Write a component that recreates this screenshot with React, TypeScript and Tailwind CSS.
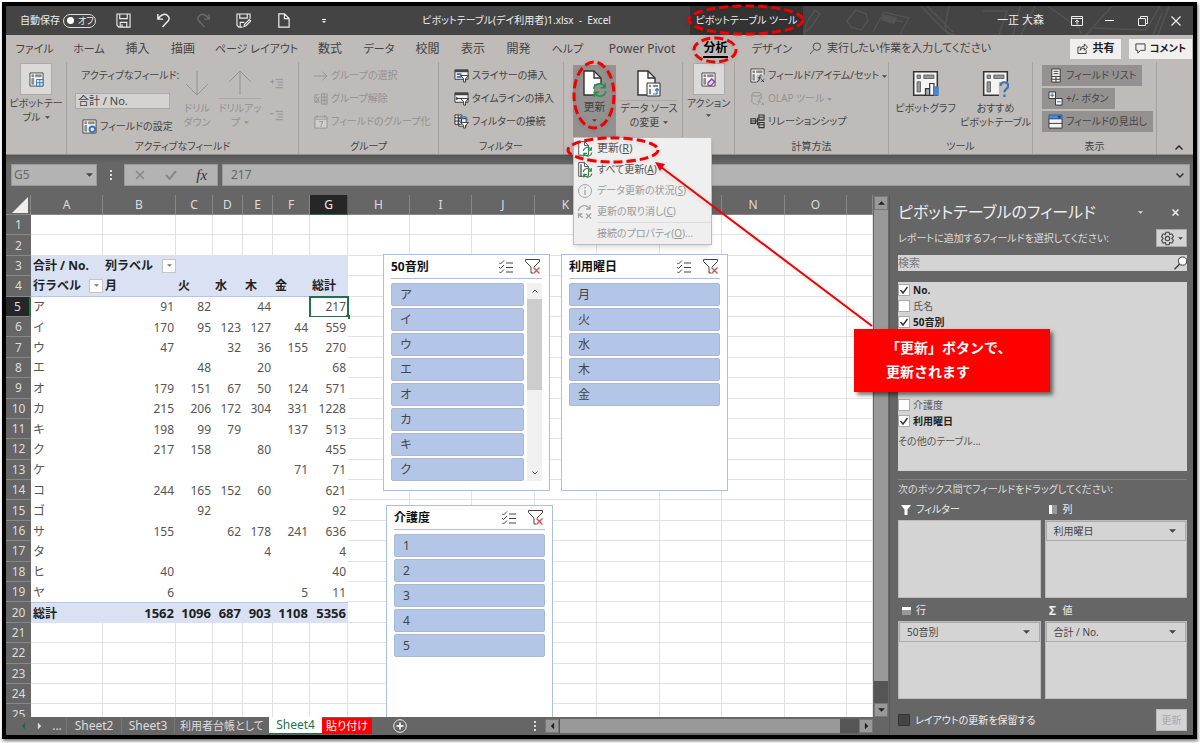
import type { ReactNode } from "react";
import clsx from "clsx";

const tabs = [
  { name: "ファイル", cls: "w-[57px] text-[11px]" },
  { name: "ホーム", cls: "w-[52px] text-[11px]" },
  { name: "挿入", cls: "w-[45px] text-xs" },
  { name: "描画", cls: "w-[46px] text-xs" },
  { name: "ページ レイアウト", cls: "w-[101px] text-[11px]" },
  { name: "数式", cls: "w-[46px] text-xs" },
  { name: "データ", cls: "w-[52px] text-[11px]" },
  { name: "校閲", cls: "w-[45px] text-xs" },
  { name: "表示", cls: "w-[46px] text-xs" },
  { name: "開発", cls: "w-[45px] text-xs" },
  { name: "ヘルプ", cls: "w-[53px] text-[11px]" },
  { name: "Power Pivot", cls: "w-[96px] text-xs" },
  { name: "分析", cls: "w-[51px] text-xs font-bold text-black", active: true },
  { name: "デザイン", cls: "w-[62px] text-[11px]" },
];

const columns = [
  { name: "A", cls: "w-[72px]" },
  { name: "B", cls: "w-[73px]" },
  { name: "C", cls: "w-[37px]" },
  { name: "D", cls: "w-[30px]" },
  { name: "E", cls: "w-[30px]" },
  { name: "F", cls: "w-[37px]" },
  { name: "G", cls: "w-[38px]" },
  { name: "H", cls: "w-[62px]" },
  { name: "I", cls: "w-[62px]" },
  { name: "J", cls: "w-[63px]" },
  { name: "K", cls: "w-[62px]" },
  { name: "L", cls: "w-[63px]" },
  { name: "M", cls: "w-[62px]" },
  { name: "N", cls: "w-[63px]" },
  { name: "O", cls: "w-[62px]" },
  { name: "", cls: "" },
];

const cells: Record<number, string[]> = {
  3: ["合計 / No.", "列ラベル", "", "", "", "", ""],
  4: ["行ラベル", "月", "火", "水", "木", "金", "総計"],
  5: ["ア", "91", "82", "", "44", "", "217"],
  6: ["イ", "170", "95", "123", "127", "44", "559"],
  7: ["ウ", "47", "", "32", "36", "155", "270"],
  8: ["エ", "", "48", "", "20", "", "68"],
  9: ["オ", "179", "151", "67", "50", "124", "571"],
  10: ["カ", "215", "206", "172", "304", "331", "1228"],
  11: ["キ", "198", "99", "79", "", "137", "513"],
  12: ["ク", "217", "158", "", "80", "", "455"],
  13: ["ケ", "", "", "", "", "71", "71"],
  14: ["コ", "244", "165", "152", "60", "", "621"],
  15: ["ゴ", "", "92", "", "", "", "92"],
  16: ["サ", "155", "", "62", "178", "241", "636"],
  17: ["タ", "", "", "", "4", "", "4"],
  18: ["ヒ", "40", "", "", "", "", "40"],
  19: ["ヤ", "6", "", "", "", "5", "11"],
  20: ["総計", "1562", "1096", "687", "903", "1108", "5356"],
};

const rowNumbers = Array.from({ length: 25 }, (_, i) => i + 1);

function Caret({ className = "" }: { className?: string }) {
  return (
    <svg viewBox="0 0 8 4" className={clsx("inline-block shrink-0", className || "h-[3px] w-[5px]")}>
      <path d="M0 0h8L4 4z" fill="currentColor" />
    </svg>
  );
}

function PivotIcon({ className = "size-[15px]", children }: { className?: string; children?: ReactNode }) {
  return (
    <svg viewBox="0 0 16 16" className={clsx("shrink-0", className)} fill="none">
      <path d="M1 1h14v14H1z" fill="#f4f4f4" stroke="#333" strokeWidth=".9" />
      <path d="M3 3h2v2H3zM7 3h6v2H7zM3 7h2v6H3z" fill="#999" stroke="#555" strokeWidth=".5" />
      {children}
    </svg>
  );
}

function RefreshArrows({ color = "#1e9448" }: { color?: string }) {
  return (
    <g fill="none" stroke={color} strokeWidth="1.4">
      <path d="M1.500 6A5 5 0 0 1 11 4.500M11.500 1v4h-4" />
      <path d="M12 8a5 5 0 0 1-9.500 1.500M2 13V9h4" />
    </g>
  );
}

function PageIcon({ children, className }: { children?: ReactNode; className: string }) {
  return (
    <svg viewBox="0 0 26 28" className={className} fill="none">
      <path d="M2 1h10l7 7v17H2z" fill="#fdfdfd" stroke="#333" strokeWidth="1.4" />
      <path d="M12 1v7h7" stroke="#333" strokeWidth="1.4" />
      {children}
    </svg>
  );
}

function SlicerIcon({ timeline }: { timeline?: boolean }) {
  return (
    <svg viewBox="0 0 16 16" className="size-[15px] shrink-0" fill="none">
      <path d="M1 2h14v10H1z" fill="#f4f4f4" stroke="#333" />
      <path d="M1 2h14v2.500H1z" fill="#444" />
      {timeline ? (
        <path d="M3 8h6M3 6.500v3" stroke="#333" strokeWidth="1.300" />
      ) : (
        <path d="M3 6.500h5M3 9.500h5" stroke="#3b73b9" strokeWidth="1.800" />
      )}
      <path d="M7 8h8.500l-3.200 3.500V15h-2v-3.500z" fill="#fff" stroke="#333" />
    </svg>
  );
}

function Group({ label, className, children }: { label?: string; className: string; children?: ReactNode }) {
  return (
    <section className={clsx("relative flex shrink-0 flex-col border-r border-[#a5a19f]", className)}>
      <div className="flex h-[77px] items-start">{children}</div>
      <h2 className="h-4 text-center text-[10px] leading-4 font-normal">{label}</h2>
    </section>
  );
}

function Command({ icon, children, disabled }: { icon: ReactNode; children: ReactNode; disabled?: boolean }) {
  return (
    <button
      disabled={disabled}
      className="flex h-[21px] items-center gap-[3px] text-[10px] whitespace-nowrap disabled:text-[#949190]"
    >
      {icon}
      <span>{children}</span>
    </button>
  );
}

function CheckMark() {
  return (
    <svg viewBox="0 0 12 12" className="pointer-events-none absolute top-[2px] left-0 hidden size-3 peer-checked:block">
      <path d="M2.500 6l2.500 3 4.500-6" fill="none" stroke="#333" strokeWidth="1.400" />
    </svg>
  );
}

function Field({ name, checked }: { name: string; checked?: boolean }) {
  return (
    <label className={clsx("relative flex h-4 items-center gap-[3px]", checked ? "font-bold text-[#222]" : "text-[#555]")}>
      <input
        type="checkbox"
        defaultChecked={checked}
        className="peer size-3 appearance-none border border-[#aaa] bg-white"
      />
      <CheckMark />
      {name}
    </label>
  );
}

function TitleBar() {
  return (
    <header className="relative flex h-[29px] shrink-0 items-center bg-[#444] text-[11px] text-[#eee]">
      <svg viewBox="0 0 390 29" className="absolute right-0 h-[29px] w-[390px]" fill="none" stroke="#535353" strokeWidth="1.500">
        <path d="M1 27l3-11 8-12 5 4-9 13zM44 15l9-11 10 4 2 7-7 9-10-3zM70 26l11-20 25 6-9 16M78 11l22 5M118 0l28 29M124 0l26 26M146 0l-4 20q0 7 10 9M180 5h24l-8 24M210 29l7-29M218 29l14-29M245 0l30 22M273 10l5 18M283 29l26-29h48l-14 24-52-2M350 29l9-22M366 0l-11 29" />
        <path d="M81 9l12 3-2 5-11-3z" fill="#535353" />
      </svg>
      <div className="flex w-[684px] items-center">
        <div className="flex shrink-0 items-center gap-[3px] pl-[14px] text-[10px] whitespace-nowrap">
          <span id="autosave">自動保存</span>
          <button
            role="switch"
            aria-checked="false"
            aria-labelledby="autosave"
            className="flex h-[14px] w-[33px] items-center gap-1 rounded-full border border-[#ddd] pl-[3px] text-[9px]"
          >
            <span className="size-[7px] shrink-0 rounded-full bg-white" />
            オフ
          </button>
        </div>
        <div className="flex shrink-0 items-center gap-[25px] pl-5">
          <button aria-label="上書き保存">
            <svg viewBox="0 0 16 16" className="size-[15px]" fill="none" stroke="#eee" strokeWidth="1.200">
              <path d="M1 1h14v14H3l-2-2zM4 1v5h8V1M4.500 15v-5h7v5M6.500 15v-3" />
            </svg>
          </button>
          <button aria-label="元に戻す">
            <svg viewBox="0 0 16 16" className="size-[15px]" fill="none" stroke="#eee" strokeWidth="1.500">
              <path d="M2 1v5.500h5.500M2 6.500C5 2 9 0 12 2.500s2.500 5-.500 7.500L7 15" />
            </svg>
          </button>
          <button aria-label="やり直し">
            <svg viewBox="0 0 16 16" className="size-[15px]" fill="none" stroke="#6a6a6a" strokeWidth="1.500">
              <path d="M14 1v5.500H8.500M14 6.500C11 2 7 0 4 2.500s-2.500 5 .500 7.500L9 15" />
            </svg>
          </button>
          <button aria-label="名前を付けて保存">
            <svg viewBox="0 0 16 16" className="size-[15px]" fill="none" stroke="#eee" strokeWidth="1.200">
              <path d="M15 6V1H1v12l2 2h4M4 1v4.500h8V1M4.500 15v-5H9M8.500 14.500l.700-2.500 5-5 1.500 1.500-5 5z" />
            </svg>
          </button>
          <button aria-label="新規作成">
            <svg viewBox="0 0 16 16" className="size-[15px]" fill="none" stroke="#eee" strokeWidth="1.300">
              <path d="M3 1h6l5 5v9H3zM9 1v5h5" />
            </svg>
          </button>
          <button aria-label="カスタマイズ" className="flex w-4 flex-col items-center gap-px">
            <span className="h-px w-1 bg-white" />
            <Caret className="h-[2px] w-1" />
          </button>
        </div>
        <h1 className="flex-1 pl-[11px] text-center text-[10px] whitespace-nowrap">
          ピボットテーブル(デイ利用者)1.xlsx &nbsp;-&nbsp; Excel
        </h1>
      </div>
      <div className="flex h-full w-[113px] items-center justify-center bg-[#333] text-[10px] whitespace-nowrap">
        ピボットテーブル ツール
      </div>
      <div className="relative flex flex-1 items-center justify-end">
        <span className="pr-4">一正 大森</span>
        <button aria-label="リボンの表示オプション" className="flex w-[33px] justify-center">
          <svg viewBox="0 0 12 10" className="h-[10px] w-3" fill="none" stroke="#eee">
            <path d="M.500.500h11v9H.500zM.500 2.500h11M6 8.500V4M4 6l2-2 2 2" />
          </svg>
        </button>
        <button aria-label="最小化" className="flex w-[33px] justify-center">
          <span className="h-px w-[9px] bg-white" />
        </button>
        <button aria-label="元のサイズに戻す" className="flex w-[33px] justify-center">
          <svg viewBox="0 0 10 10" className="size-[10px]" fill="none" stroke="#eee">
            <path d="M.500 2.500h7v7h-7zM2.500 2.500v-2h7v7h-2" />
          </svg>
        </button>
        <button aria-label="閉じる" className="flex w-[34px] justify-center">
          <svg viewBox="0 0 10 10" className="size-[10px]" stroke="#eee" strokeWidth="1.200">
            <path d="M.500.500l9 9M9.500.500l-9 9" />
          </svg>
        </button>
      </div>
    </header>
  );
}

function TabBar() {
  return (
    <nav className="flex h-[27px] shrink-0 items-center text-[#444]">
      {tabs.map((tab) => (
        <button key={tab.name} className={clsx("flex h-[26px] shrink-0 items-center justify-center whitespace-nowrap", tab.cls)}>
          <span className={clsx("leading-[17px]", tab.active && "border-b-2 border-black leading-[16px]")}>{tab.name}</span>
        </button>
      ))}
      <label className="flex flex-1 items-center gap-[5px] pl-[6px]">
        <svg viewBox="0 0 14 14" className="size-[13px] shrink-0" fill="none" stroke="#444">
          <circle cx="8.500" cy="5" r="4" />
          <path d="M5.500 8L1 13" />
        </svg>
        <input
          placeholder="実行したい作業を入力してください"
          className="w-full min-w-0 text-[11px] outline-none placeholder:text-[#444]"
        />
      </label>
      <button className="flex h-5 w-[51px] shrink-0 items-center justify-center gap-[5px] bg-[#f1f0ef] text-[11px] font-bold text-[#222]">
        <svg viewBox="0 0 12 12" className="size-[11px]" fill="none" stroke="#333">
          <path d="M4 4.500H1v7h9V8M3.500 8c0-3 2-4.500 4.500-4.500V1l3.500 3.500L8 8V5.500C6 5.500 4.500 6 3.500 8z" />
        </svg>
        共有
      </button>
      <button className="mr-px ml-2 flex h-5 w-[63px] shrink-0 items-center justify-center gap-1 bg-[#f1f0ef] text-[10px] font-bold whitespace-nowrap text-[#222]">
        <svg viewBox="0 0 12 12" className="size-[11px]" fill="none" stroke="#333">
          <path d="M1 1h10v7H6l-3 3V8H1z" />
        </svg>
        コメント
      </button>
    </nav>
  );
}

function RefreshMenu() {
  return (
    <ul
      role="menu"
      className="absolute top-[75px] left-[9px] z-10 w-[139px] border border-[#bdbdbd] bg-[#efefef] text-[11px] text-[#555] shadow-md [&_button]:flex [&_button]:h-[21px] [&_button]:w-full [&_button]:items-center [&_button]:gap-1 [&_button]:pl-[3px] [&_button]:whitespace-nowrap [&_button:disabled]:text-[#9a9a9a]"
    >
      <li>
        <button>
          <PageIcon className="size-4">
            <g transform="translate(8 9) scale(1.400)"><RefreshArrows /></g>
          </PageIcon>
          <span>更新(<u>R</u>)</span>
        </button>
      </li>
      <li>
        <button>
          <PageIcon className="size-4">
            <path d="M6 4v22" stroke="#333" strokeWidth="2" />
            <g transform="translate(8 9) scale(1.400)"><RefreshArrows /></g>
          </PageIcon>
          <span className="text-[10px]">すべて更新(<u>A</u>)</span>
        </button>
      </li>
      <li>
        <button disabled>
          <svg viewBox="0 0 16 16" className="size-4" fill="none" stroke="#a5a5a5">
            <circle cx="8" cy="8" r="6.500" />
            <path d="M8 7v5M8 4v1.500" strokeWidth="1.400" />
          </svg>
          <span className="text-[10px]">データ更新の状況(<u>S</u>)</span>
        </button>
      </li>
      <li>
        <button disabled>
          <svg viewBox="0 0 16 16" className="size-4" fill="none" stroke="#a5a5a5" strokeWidth="1.300">
            <path d="M1.500 7a6 6 0 0 1 11-2.500M13 1v4H9M6 13.500A6 6 0 0 1 2 10M1.500 14v-4h4M9 9.500l5 5M14 9.500l-5 5" />
          </svg>
          <span className="text-[10px]">更新の取り消し(<u>C</u>)</span>
        </button>
      </li>
      <li className="ml-6 border-t border-[#ddd]">
        <button disabled className="text-[10px]">
          <span className="-ml-1">接続のプロパティ(<u>O</u>)...</span>
        </button>
      </li>
    </ul>
  );
}

function Ribbon() {
  return (
    <div className="flex h-[93px] shrink-0 border-b border-[#8f8c8a] text-[#444]">
      <Group className="w-[61px]">
        <button className="flex w-full flex-col items-center pt-px text-[10px] leading-[14px]">
          <span className="mb-px flex size-8 items-center justify-center border border-[#aaa] bg-[#dcdad8]">
            <PivotIcon>
              <path d="M8 8h7v7H8z" fill="#dce9f7" stroke="#3b73b9" />
              <path d="M11.500 8v7M8 11.500h7" stroke="#3b73b9" />
            </PivotIcon>
          </span>
          <span className="whitespace-nowrap">ピボットテー</span>
          <span className="flex items-center gap-1">ブル <Caret /></span>
        </button>
      </Group>

      <Group label="アクティブなフィールド" className="w-[232px]">
        <div className="ml-2 flex w-[104px] flex-col pt-1">
          <label htmlFor="active-field" className="h-[19px] pl-[6px] text-[10px] leading-[19px] whitespace-nowrap">
            アクティブなフィールド:
          </label>
          <input
            id="active-field"
            defaultValue="合計 / No."
            className="mt-2 h-4 w-[95px] border border-[#aaa] bg-[#d5d3d1] px-[2px] text-[11px] outline-none"
          />
          <div className="mt-[7px] pl-[7px]">
            <Command
              icon={
                <PivotIcon>
                  <circle cx="11" cy="11" r="3" fill="#dce9f7" stroke="#3b73b9" strokeWidth="2" />
                </PivotIcon>
              }
            >
              フィールドの設定
            </Command>
          </div>
        </div>
        <button disabled className="flex w-[36px] flex-col items-center pt-2 text-[10px] leading-[14px] text-[#949190]">
          <svg viewBox="0 0 24 26" className="mb-[5px] h-[26px] w-6" fill="none" stroke="currentColor">
            <path d="M12 1v24M1 14l11 11 11-11" />
          </svg>
          <span>ドリル</span>
          <span>ダウン</span>
        </button>
        <button disabled className="ml-1 flex w-[42px] flex-col items-center pt-2 text-[10px] leading-[14px] text-[#949190]">
          <svg viewBox="0 0 24 26" className="mb-[2px] h-[26px] w-6" fill="none" stroke="currentColor">
            <path d="M12 25V1M1 12L12 1l11 11" />
          </svg>
          <span className="border-t border-[#aaa] pt-[2px] whitespace-nowrap">ドリルアッ</span>
          <span className="flex items-center gap-1">プ <Caret /></span>
        </button>
        <div className="flex flex-col gap-[19px] pt-[15px] pl-[9px] text-[#949190]">
          <button disabled aria-label="フィールドの展開">
            <svg viewBox="0 0 14 14" className="block size-[13px]" stroke="currentColor">
              <path d="M0 5h5M2.500 2.500v5M6 2.500h8M8 5.500h6M8 8.500h6M6 11.500h8" />
            </svg>
          </button>
          <button disabled aria-label="フィールドの折りたたみ">
            <svg viewBox="0 0 14 14" className="block size-[13px]" stroke="currentColor">
              <path d="M0 5h4M6 2.500h8M8 5.500h6M8 8.500h6M6 11.500h8" />
            </svg>
          </button>
        </div>
      </Group>

      <Group label="グループ" className="w-[140px]">
        <div className="flex flex-col gap-[2px] pt-[3px] pl-[15px]">
          <Command
            disabled
            icon={
              <svg viewBox="0 0 15 15" className="size-[14px]" fill="none" stroke="currentColor">
                <path d="M0 7.500h14M9 3l5 4.500L9 12" />
              </svg>
            }
          >
            グループの選択
          </Command>
          <Command
            disabled
            icon={
              <svg viewBox="0 0 15 15" className="size-[14px]" fill="none" stroke="currentColor">
                <path d="M8 2h6v11H8zM8 5.500h6M8 9h6M11 2v11M5 3H1v8h4M6 5l-4 6M2 5l4 6" />
              </svg>
            }
          >
            グループ解除
          </Command>
          <Command
            disabled
            icon={
              <svg viewBox="0 0 15 15" className="size-[14px]" fill="none" stroke="currentColor">
                <path d="M1 2h13v12H1z" fill="#d0cdca" />
                <path d="M1 4.500h13M3.500 0v3M11.500 0v3M5.500 7h4L7 12.500" />
              </svg>
            }
          >
            フィールドのグループ化
          </Command>
        </div>
      </Group>

      <Group label="フィルター" className="w-[125px]">
        <div className="flex flex-col gap-[2px] pt-[3px] pl-[15px]">
          <Command icon={<SlicerIcon />}>スライサーの挿入</Command>
          <Command icon={<SlicerIcon timeline />}>タイムラインの挿入</Command>
          <Command
            icon={
              <svg viewBox="0 0 16 16" className="size-[15px] shrink-0" fill="none">
                <path d="M1 1h7v10H1zM1 4h7M1 7.500h7M4.500 1v10M5 5h8v8H5z" stroke="#333" fill="#f4f4f4" />
                <path d="M7 3h4q3 0 3 4M9 1L7 3l2 2" stroke="#3b73b9" strokeWidth="1.300" />
                <path d="M7 9h8.500l-3.200 3V15h-2v-3z" fill="#fff" stroke="#333" />
              </svg>
            }
          >
            フィルターの接続
          </Command>
        </div>
      </Group>

      <Group className="w-[119px]">
        <button className="mt-[3px] ml-[9px] flex h-[72px] w-[43px] shrink-0 flex-col items-center bg-[#949190] pt-[5px] text-[11px]">
          <PageIcon className="h-7 w-[26px]">
            <path d="M12 14h12v12H12z" fill="#949190" />
            <g transform="translate(10 12) scale(1.150)"><RefreshArrows /></g>
          </PageIcon>
          <span className="mt-px leading-4">更新</span>
          <Caret className="mt-1 h-[3px] w-[5px]" />
        </button>
        <button className="mt-[3px] flex flex-1 flex-col items-center pt-[5px] text-[10px] leading-[14px]">
          <PageIcon className="mb-[2px] h-7 w-[26px]">
            <path d="M11 13h13v13H11z" fill="#f4f4f4" stroke="#333" />
            <path d="M13 15h2v2h-2zM17 15h5v2h-5zM13 19h2v5h-2z" fill="#888" />
            <path d="M17 24h4v-5M19 20.500l2-2 2 2" stroke="#3b73b9" strokeWidth="1.200" />
          </PageIcon>
          <span className="border-t border-[#aaa] whitespace-nowrap">データ ソース</span>
          <span className="flex items-center gap-1">の変更 <Caret /></span>
        </button>
        <RefreshMenu />
      </Group>

      <Group className="w-[52px]">
        <button className="flex w-full flex-col items-center pt-px text-[10px] leading-[14px]">
          <span className="mb-px flex size-8 items-center justify-center border border-[#aaa] bg-[#dcdad8]">
            <PivotIcon>
              <path d="M7.500 11.500l4-4 3 3-4 4h-2l-1-1z" fill="#e6d3ec" stroke="#8b3ba5" strokeWidth="1.400" />
            </PivotIcon>
          </span>
          <span className="whitespace-nowrap">アクション</span>
          <Caret className="mt-1 h-[3px] w-[5px]" />
        </button>
      </Group>

      <Group label="計算方法" className="w-[154px]">
        <div className="flex flex-col gap-[2px] pt-[3px] pl-[15px]">
          <Command
            icon={
              <PivotIcon>
                <path d="M7 7h9v9H7z" fill="#bfbbb8" />
                <path d="M12.500 7.500c-2-1-2 2-2.500 4s-1 3.500-2.500 3M8.500 10.500h3.500M12 12l3 3M15 12l-3 3" stroke="#333" />
              </PivotIcon>
            }
          >
            フィールド/アイテム/セット <Caret />
          </Command>
          <Command
            disabled
            icon={
              <svg viewBox="0 0 16 16" className="size-[15px]" fill="none" stroke="currentColor">
                <ellipse cx="7" cy="3.500" rx="5" ry="2" />
                <path d="M2 3.500V12q1 2 4 2M12 3.500V8M12 8c-2-1-2 2-2.500 4S8 15 7 15M8 11h3.500M12 12l3 3M15 12l-3 3" />
              </svg>
            }
          >
            OLAP ツール <Caret />
          </Command>
          <Command
            icon={
              <svg viewBox="0 0 16 16" className="size-[15px]" fill="none" stroke="#333" strokeWidth="1.200">
                <path d="M1 5h5v5H1zM1 7.500h5M9.500 1H15v5.500H9.500zM9.500 9H15v5.500H9.500zM9.500 3.500H15M9.500 11.500H15M6 7.500h2M8 4v8" />
              </svg>
            }
          >
            リレーションシップ
          </Command>
        </div>
      </Group>

      <Group label="ツール" className="w-[144px]">
        <div className="flex w-full justify-center gap-1 pt-2 text-[10px] leading-[14px]">
          <button className="flex w-[66px] flex-col items-center whitespace-nowrap">
            <PivotIcon className="mb-1 size-[27px]">
              <path d="M8 11h2.500v4H8z" fill="#aaa" stroke="#333" strokeWidth=".7" />
              <path d="M10.500 8H13v7h-2.500z" fill="#fff" stroke="#333" strokeWidth=".7" />
              <path d="M13 10h2.500v5H13z" fill="#4b8bd6" stroke="#3b73b9" strokeWidth=".5" />
            </PivotIcon>
            ピボットグラフ
          </button>
          <button className="flex w-[66px] flex-col items-center whitespace-nowrap">
            <PivotIcon className="mb-1 size-[27px]">
              <path d="M10 7h6v9h-6z" fill="#bfbbb8" />
              <path d="M11 9.500c0-3 4.500-3 4.500 0 0 1.700-2.200 1.700-2.200 3.700M13.300 14.500V16" stroke="#3b73b9" strokeWidth="1.300" />
            </PivotIcon>
            <span>おすすめ</span>
            <span>ピボットテーブル</span>
          </button>
        </div>
      </Group>

      <Group label="表示" className="w-[124px]">
        <div className="flex flex-col items-start gap-[2px] pt-[3px] pl-[9px] [&_button]:bg-[#949190] [&_button]:px-[6px]">
          <Command
            icon={
              <svg viewBox="0 0 16 16" className="size-[15px] shrink-0" fill="#f4f4f4" stroke="#333">
                <path d="M4 1h9v14H4zM4 9h9M4 12h9M8.500 9v6M6 3.500h5M6 6h5" />
              </svg>
            }
          >
            フィールド リスト
          </Command>
          <Command
            icon={
              <svg viewBox="0 0 16 16" className="size-[15px] shrink-0" fill="#f4f4f4" stroke="#333">
                <path d="M1 1h7v7H1zM8 8h7v7H8z" />
                <path d="M4.500 2.500v4M2.500 4.500h4M9.500 11.500h4" stroke="#3b73b9" strokeWidth="1.200" />
              </svg>
            }
          >
            +/- ボタン
          </Command>
          <Command
            icon={
              <svg viewBox="0 0 16 16" className="size-[15px] shrink-0" fill="#f4f4f4" stroke="#333">
                <path d="M1 5h14v10H1zM1 10h14" />
                <path d="M1 1h14v4H1z" fill="#4b8bd6" stroke="#2e5f9c" />
                <path d="M10 2.500h4L12 4.500z" fill="#222" stroke="none" />
              </svg>
            }
          >
            フィールドの見出し
          </Command>
        </div>
      </Group>

      <div className="flex flex-1 items-end justify-center pb-1">
        <button aria-label="リボンを折りたたむ" className="pl-2">
          <svg viewBox="0 0 8 5" className="h-[5px] w-2" fill="none" stroke="#222" strokeWidth="1.400">
            <path d="M.500 4.500L4 1l3.500 3.500" />
          </svg>
        </button>
      </div>
    </div>
  );
}

function FormulaBar() {
  return (
    <div className="flex h-10 shrink-0 items-start bg-linear-to-b from-[#555] to-[#666] to-20% pt-[9px] pr-[3px] pl-[5px] text-xs text-[#666]">
      <div className="flex h-[22px] w-[86px] items-center border border-[#999] bg-[#b3b3b3] pr-[3px]">
        <input aria-label="名前ボックス" defaultValue="G5" className="w-full min-w-0 pl-[2px] outline-none" />
        <Caret className="h-1 w-[7px] text-[#444]" />
      </div>
      <span className="flex h-[22px] w-[27px] flex-col items-center justify-center gap-[2px]">
        <i className="size-[2px] bg-[#ddd]" />
        <i className="size-[2px] bg-[#ddd]" />
        <i className="size-[2px] bg-[#ddd]" />
      </span>
      <div className="flex h-[22px] w-[94px] items-center justify-around border border-[#999] bg-[#b3b3b3]">
        <button aria-label="キャンセル">
          <svg viewBox="0 0 10 10" className="size-[10px]" stroke="#888" strokeWidth="1.500">
            <path d="M1 1l8 8M9 1L1 9" />
          </svg>
        </button>
        <button aria-label="入力">
          <svg viewBox="0 0 12 10" className="h-[10px] w-3" fill="none" stroke="#888" strokeWidth="2">
            <path d="M1 5l3.500 4L11 1" />
          </svg>
        </button>
        <button className="font-['Liberation_Serif',serif] text-[15px] leading-5 text-[#333] italic">fx</button>
      </div>
      <div className="ml-1 flex h-[22px] flex-1 items-center border border-[#999] bg-[#b3b3b3] pr-[5px]">
        <input aria-label="数式バー" defaultValue="217" className="w-full pl-2 outline-none" />
        <svg viewBox="0 0 8 5" className="h-[5px] w-2" fill="none" stroke="#333" strokeWidth="1.500">
          <path d="M.500.500L4 4 7.500.500" />
        </svg>
      </div>
    </div>
  );
}

function FilterButton() {
  return (
    <button aria-label="フィルター" className="flex size-[14px] shrink-0 items-center justify-center border border-[#c5c5c5] bg-white text-[#777]">
      <Caret />
    </button>
  );
}

function Grid() {
  return (
    <table className="h-[530px] w-full table-fixed border-separate border-spacing-0 text-xs text-[#555]">
      <colgroup>
        <col className="w-[25px]" />
        {columns.map((c) => (
          <col key={c.name} className={c.cls} />
        ))}
      </colgroup>
      <thead>
        <tr className="h-5 bg-[#666] text-[#ddd]">
          <th className="border-r border-b border-[#888] p-0">
            <svg viewBox="0 0 24 19" className="block h-[19px] w-6">
              <path d="M22 2v16H6z" fill="#eee" />
            </svg>
          </th>
          {columns.map((c) => (
            <th
              key={c.name}
              className={clsx(
                "border-r border-b p-0 leading-[19px] font-normal",
                c.name === "G" ? "border-[#217346] bg-[#262626] text-[#eee]" : "border-[#888]",
              )}
            >
              {c.name}
            </th>
          ))}
        </tr>
      </thead>
      <tbody>
        {rowNumbers.map((n) => {
          const strong = n === 3 || n === 4 || n === 20;
          return (
            <tr key={n}>
              <th
                className={clsx(
                  "border-b border-[#888] p-0 leading-[19px] font-normal text-[#ddd]",
                  n === 5 ? "border-r-2 border-r-[#217346] bg-[#262626]" : "bg-[#666]",
                )}
              >
                {n}
              </th>
              {columns.map((c, i) => {
                if (!cells[n] || i > 6) {
                  return <td key={i} className="border-r border-b border-[#e2e2e2] bg-white p-0" />;
                }
                const text = cells[n][i];
                return (
                  <td
                    key={i}
                    className={clsx(
                      "relative p-0 leading-[19px] whitespace-nowrap",
                      strong ? "bg-[#d9e1f2] font-bold text-[#222]" : "bg-white",
                      n === 20 && i > 0 && "text-[13px]",
                      n === 4 && "border-b border-[#b4c6e7]",
                      n === 20 && "border-t border-[#b4c6e7]",
                      i === 0 || n < 5 ? "pl-[2px] text-left" : "pr-[2px] text-right",
                    )}
                  >
                    {(n === 3 && i === 1) || (n === 4 && i === 0) ? (
                      <div className="flex items-center justify-between">
                        {text}
                        <FilterButton />
                      </div>
                    ) : (
                      text
                    )}
                    {n === 5 && i === 6 && (
                      <span className="absolute -inset-px border-2 border-[#217346]">
                        <span className="absolute -right-[3px] -bottom-[3px] size-1 bg-[#217346]" />
                      </span>
                    )}
                  </td>
                );
              })}
            </tr>
          );
        })}
      </tbody>
    </table>
  );
}

function Slicer({ title, items, className, scroll }: { title: string; items: string[]; className: string; scroll?: boolean }) {
  return (
    <section className={clsx("absolute w-[167px] border border-[#a9bfe6] bg-white px-[7px] text-xs text-[#444]", className)}>
      <header className="flex h-6 items-center border-b border-[#a9bfe6]">
        <h3 className="flex-1 font-bold text-[#111]">{title}</h3>
        <button aria-label="複数選択">
          <svg viewBox="0 0 14 14" className="size-[14px]" fill="none" stroke="#444">
            <path d="M0 2.500l1.500 1.500L5 .500M0 7l1.500 1.500L5 5M0 11.500L1.500 13 5 9.500M7 3h7M7 7.500h7M7 12h7" />
          </svg>
        </button>
        <button aria-label="フィルターのクリア" className="mr-[2px] ml-3">
          <svg viewBox="0 0 15 15" className="size-[15px]" fill="none" stroke="#444">
            <path d="M.500.500h14v2L9 8M.500.500v2L6 8v6h2" />
            <path d="M8.500 8.500l6 6M14.500 8.500l-6 6" stroke="#e04848" strokeWidth="1.300" />
          </svg>
        </button>
      </header>
      <div className="flex gap-[3px] pt-1">
        <div className="flex flex-1 flex-col gap-[2px]">
          {items.map((item) => (
            <button key={item} className="h-[23px] rounded-[2px] border border-[#a9b8d3] bg-[#b4c6e7] pl-2 text-left leading-5">
              {item}
            </button>
          ))}
        </div>
        {scroll && (
          <div className="flex w-[15px] flex-col items-center justify-between bg-[#f0f0f0] py-[6px]">
            <svg viewBox="0 0 6 4" className="h-1 w-[6px]" fill="none" stroke="#444">
              <path d="M.500 3.500L3 1l2.500 2.500" />
            </svg>
            <span className="mt-[6px] h-[91px] w-full bg-[#cdcdcd]" />
            <span className="flex-1" />
            <svg viewBox="0 0 6 4" className="h-1 w-[6px]" fill="none" stroke="#444">
              <path d="M.500.500L3 3 5.500.500" />
            </svg>
          </div>
        )}
      </div>
    </section>
  );
}

function ScrollButton({ dir }: { dir: "up" | "down" | "left" | "right" }) {
  return (
    <button aria-label={dir} className="flex size-[14px] shrink-0 items-center justify-center border border-[#777] bg-[#999] text-[#222]">
      <Caret
        className={clsx(
          "h-1 w-[7px]",
          dir === "up" && "rotate-180",
          dir === "left" && "rotate-90",
          dir === "right" && "-rotate-90",
        )}
      />
    </button>
  );
}

function SheetTabs() {
  return (
    <footer className="flex h-[18px] shrink-0 items-center bg-[#666] pr-4 text-xs text-[#ddd]">
      <button aria-label="前のシート" className="flex w-[30px] items-center justify-center pl-1 text-[#1c6b40]">
        <Caret className="h-1 w-[7px] rotate-90" />
      </button>
      <button aria-label="次のシート" className="flex w-3 items-center">
        <Caret className="h-1 w-[7px] -rotate-90" />
      </button>
      <button className="w-[18px] leading-4">...</button>
      <button className="w-[55px] border-l border-[#777] leading-4">Sheet2</button>
      <button className="w-[54px] border-x border-[#777] leading-4">Sheet3</button>
      <button className="w-[94px] text-[11px] leading-4 whitespace-nowrap">利用者台帳として</button>
      <button className="h-[17px] w-[53px] self-start border-b border-[#217346] bg-white leading-4 text-[#217346]">Sheet4</button>
      <button className="h-4 w-[50px] bg-[#f00] text-[11px] leading-4 text-white">貼り付け</button>
      <button aria-label="新しいシート" className="ml-[21px]">
        <svg viewBox="0 0 14 14" className="block size-[14px]" fill="none" stroke="#eee">
          <circle cx="7" cy="7" r="6.300" />
          <path d="M7 3.500v7M3.500 7h7" strokeWidth="1.800" />
        </svg>
      </button>
      <span className="min-w-0 flex-1" />
      <span className="mr-[9px] flex flex-col gap-[2px]">
        <i className="size-[2px] bg-[#ddd]" />
        <i className="size-[2px] bg-[#ddd]" />
        <i className="size-[2px] bg-[#ddd]" />
      </span>
      <div className="flex w-[328px] bg-[#555]">
        <ScrollButton dir="left" />
        <span className="ml-px h-[14px] w-[280px] bg-[#999]" />
        <span className="flex-1" />
        <ScrollButton dir="right" />
      </div>
    </footer>
  );
}

function AreaBox({ label, icon, chip }: { label: string; icon: ReactNode; chip?: string }) {
  return (
    <div className="flex flex-col">
      <h3 className="flex h-[21px] items-center gap-[5px] pl-[3px] font-normal text-[#eee]">
        <span className="flex w-[10px] justify-center">{icon}</span>
        {label}
      </h3>
      <div className="h-[78px] border border-[#bbb] bg-[#d4d4d4]">
        {chip && (
          <button className="flex h-5 w-full items-center justify-between border border-[#aaa] pr-[9px] pl-[7px] text-[#444]">
            {chip}
            <Caret className="h-1 w-[7px]" />
          </button>
        )}
      </div>
    </div>
  );
}

function FieldsPane() {
  return (
    <aside className="flex w-[304px] shrink-0 flex-col border-l border-[#5a5a5a] bg-[#666] pr-[6px] pl-2 text-[10px] text-[#ddd]">
      <header className="flex h-[34px] items-center">
        <h2 className="flex-1 text-base text-[#eee]">ピボットテーブルのフィールド</h2>
        <button aria-label="オプション" className="flex w-[35px] pl-px">
          <Caret />
        </button>
        <button aria-label="閉じる" className="mr-2">
          <svg viewBox="0 0 7 7" className="size-[7px]" stroke="#eee" strokeWidth="1.500">
            <path d="M.500.500l6 6M6.500.500l-6 6" />
          </svg>
        </button>
      </header>
      <div className="flex h-[18px] items-center justify-between">
        <p className="whitespace-nowrap">レポートに追加するフィールドを選択してください:</p>
        <button aria-label="ツール" className="flex h-[18px] w-[31px] items-center justify-center gap-[3px] border border-[#aaa] bg-[#d4d4d4] text-[#444]">
          <svg viewBox="0 0 24 24" className="size-[15px]" fill="none" stroke="#444" strokeWidth="1.800">
            <path d="M9.500 2h5l1 3.500 3.500-1 2.500 4.500-2.500 3 2.500 3-2.500 4.500-3.500-1-1 3.500h-5l-1-3.500-3.500 1L2.500 15 5 12 2.500 9 5 4.500l3.500 1z" />
            <circle cx="12" cy="12" r="3.500" />
          </svg>
          <Caret />
        </button>
      </div>
      <label className="mt-2 flex h-4 items-center bg-[#d4d4d4]">
        <input placeholder="検索" className="w-full text-[11px] text-[#444] outline-none placeholder:text-[#777]" />
        <svg viewBox="0 0 14 14" className="size-[14px]" stroke="#333">
          <circle cx="9" cy="5" r="4.300" fill="#fff" />
          <path d="M6 8L.500 13.500" strokeWidth="1.300" />
        </svg>
      </label>
      <div className="mt-[11px] h-[189px] bg-[#d4d4d4] text-[#555]">
        <Field name="No." checked />
        <Field name="氏名" />
        <Field name="50音別" checked />
        <div className="mt-[67px]">
          <Field name="介護度" />
          <Field name="利用曜日" checked />
        </div>
        <a href="#tables" className="mt-[5px] block">その他のテーブル...</a>
      </div>
      <p className="mt-2 border-t border-[#808080] leading-[18px]">次のボックス間でフィールドをドラッグしてください:</p>
      <div className="mt-px grid grid-cols-2 gap-x-1 gap-y-[2px]">
        <AreaBox
          label="フィルター"
          icon={
            <svg viewBox="0 0 10 10" className="size-[10px]" fill="#fff">
              <path d="M0 0h10L6.500 4.500V10h-3V4.500z" />
            </svg>
          }
        />
        <AreaBox
          label="列"
          chip="利用曜日"
          icon={<span className="h-[9px] w-2 border-l-[3px] border-white bg-[#999]" />}
        />
        <AreaBox
          label="行"
          chip="50音別"
          icon={<span className="h-2 w-[9px] border-t-[3px] border-white bg-[#999]" />}
        />
        <AreaBox label="値" chip="合計 / No." icon={<span className="text-xs font-bold">Σ</span>} />
      </div>
      <div className="mt-[10px] flex h-[22px] items-center justify-between">
        <label className="flex items-center gap-[5px] text-[#eee]">
          <input type="checkbox" className="size-3 appearance-none border border-[#333] bg-[#444]" />
          レイアウトの更新を保留する
        </label>
        <button disabled className="h-[22px] w-[31px] border border-[#bbb] bg-[#d4d4d4] text-[#aaa]">
          更新
        </button>
      </div>
    </aside>
  );
}

function Annotations() {
  return (
    <>
      <svg
        viewBox="0 0 1200 400"
        className="pointer-events-none absolute top-0 left-0 z-20 h-[400px] w-[1200px] drop-shadow-sm"
        fill="none"
        stroke="#f00000"
        strokeWidth="3"
      >
        <g strokeDasharray="9 4">
          <ellipse cx="746" cy="20" rx="57" ry="14" />
          <ellipse cx="715" cy="50" rx="21" ry="12" />
          <ellipse cx="594" cy="95" rx="20" ry="33" />
          <ellipse cx="613" cy="150" rx="45" ry="12" />
        </g>
        <path d="M661 167l211 159" strokeWidth="2" />
        <path d="M655 162l10 2-5 7z" fill="#f00000" stroke="none" />
      </svg>
      <p className="absolute top-[329px] left-[854px] z-20 h-[63px] w-[196px] bg-[#f00] py-[6px] pl-8 font-['Noto_Sans_CJK_JP',sans-serif] text-sm leading-6 font-bold whitespace-nowrap text-white shadow-[3px_3px_4px_#0008]">
        「更新」ボタンで、
        <br />
        更新されます
      </p>
    </>
  );
}

export default function App() {
  return (
    <div className="relative flex h-screen flex-col overflow-hidden bg-white pt-[2px] pr-[3px] pb-1 pl-[2px] font-['Noto_Sans','Noto_Sans_CJK_JP',sans-serif]">
      <div className="flex min-h-0 flex-1 flex-col border-4 border-black bg-[#bfbbb8] shadow-[1px_2px_3px_#0008] [font-feature-settings:'palt'] [&_button]:[font-feature-settings:inherit] [&_input]:[font-feature-settings:inherit]">
        <TitleBar />
        <TabBar />
        <Ribbon />
        <FormulaBar />
        <main className="flex min-h-0 flex-1 bg-[#666]">
          <div className="flex min-w-0 flex-1 flex-col">
            <div className="flex min-h-0 flex-1">
              <div className="relative min-w-0 flex-1 overflow-hidden [font-feature-settings:normal]">
                <Grid />
                <Slicer
                  title="50音別"
                  items={["ア", "イ", "ウ", "エ", "オ", "カ", "キ", "ク"]}
                  className="top-[59px] left-[377px] h-[237px]"
                  scroll
                />
                <Slicer title="利用曜日" items={["月", "火", "水", "木", "金"]} className="top-[59px] left-[555px] h-[237px]" />
                <Slicer title="介護度" items={["1", "2", "3", "4", "5"]} className="top-[310px] left-[380px] h-[237px]" />
              </div>
              <div className="ml-px flex w-[15px] flex-col pt-px">
                <ScrollButton dir="up" />
                <span className="w-[14px] flex-1 bg-[#999]" />
                <span className="h-[22px] w-[14px] bg-[#555]" />
                <ScrollButton dir="down" />
              </div>
            </div>
            <SheetTabs />
          </div>
          <FieldsPane />
        </main>
      </div>
      <Annotations />
    </div>
  );
}
